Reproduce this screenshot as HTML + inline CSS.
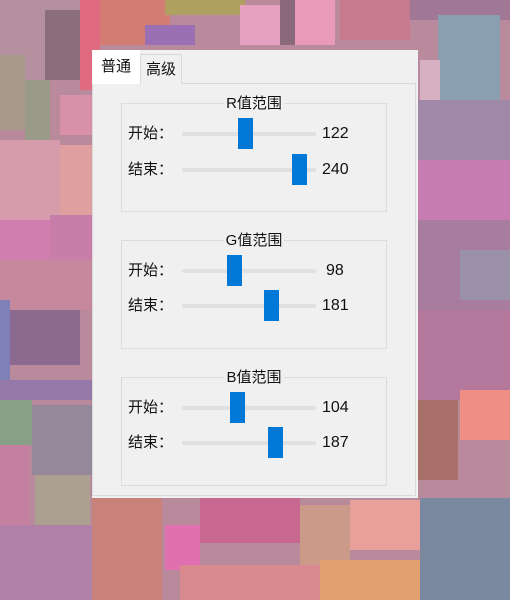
<!DOCTYPE html>
<html><head><meta charset="utf-8"><style>
*{margin:0;padding:0;box-sizing:border-box}
body{width:510px;height:600px;overflow:hidden;position:relative;background:#b98a9c;font-family:"Liberation Sans","Noto Sans CJK SC",sans-serif;font-size:14px;color:#111}
.r{position:absolute}
#panel{position:absolute;left:92px;top:50px;width:326px;height:448px;background:#f0f0f0}
.tab{position:absolute;font-size:15px;line-height:30px;text-align:center}
.pane{position:absolute;left:0;top:33px;width:324px;height:413px;border:1px solid #dadada}
.gb{position:absolute;left:29px;width:266px;height:109px;border:1px solid #dcdcdc}
.gt{position:absolute;top:-12px;left:0;width:100%;text-align:center;font-size:15px}
.gt span{background:#f0f0f0;padding:0 2px}
.lab{position:absolute;left:6px;font-size:15px;line-height:18px}
.trk{position:absolute;left:60px;width:134px;height:4px;background:#e0e0e0;border-radius:2px}
.th{position:absolute;width:15px;height:31px;background:#0078d7}
.val{position:absolute;left:200px;font-size:16px;line-height:18px}
</style></head><body>
<div class="r" style="left:0;top:0;width:100px;height:80px;background:#b5909f"></div>
<div class="r" style="left:45px;top:10px;width:40px;height:70px;background:#8c6e7a"></div>
<div class="r" style="left:80px;top:0;width:20px;height:90px;background:#e06a80"></div>
<div class="r" style="left:100px;top:0;width:70px;height:45px;background:#d37c74"></div>
<div class="r" style="left:165px;top:0;width:80px;height:15px;background:#b0a060"></div>
<div class="r" style="left:145px;top:25px;width:50px;height:20px;background:#9a6fb4"></div>
<div class="r" style="left:240px;top:5px;width:40px;height:40px;background:#e5a2c0"></div>
<div class="r" style="left:295px;top:0;width:40px;height:45px;background:#e89ab8"></div>
<div class="r" style="left:280px;top:0;width:15px;height:45px;background:#8a6a7a"></div>
<div class="r" style="left:340px;top:0;width:70px;height:40px;background:#c67a8d"></div>
<div class="r" style="left:410px;top:0;width:100px;height:20px;background:#a07896"></div>
<div class="r" style="left:438px;top:15px;width:62px;height:85px;background:#8aa0b0"></div>
<div class="r" style="left:420px;top:60px;width:20px;height:40px;background:#d6b0c0"></div>
<div class="r" style="left:418px;top:100px;width:92px;height:60px;background:#a088a8"></div>
<div class="r" style="left:418px;top:160px;width:92px;height:60px;background:#c77cb2"></div>
<div class="r" style="left:418px;top:220px;width:92px;height:90px;background:#a87c9e"></div>
<div class="r" style="left:460px;top:250px;width:50px;height:50px;background:#9a90a8"></div>
<div class="r" style="left:418px;top:310px;width:92px;height:90px;background:#b4789c"></div>
<div class="r" style="left:418px;top:400px;width:40px;height:80px;background:#a87068"></div>
<div class="r" style="left:460px;top:390px;width:50px;height:50px;background:#ef8e84"></div>
<div class="r" style="left:420px;top:498px;width:90px;height:102px;background:#7a88a0"></div>
<div class="r" style="left:0;top:55px;width:25px;height:75px;background:#a89a8a"></div>
<div class="r" style="left:25px;top:80px;width:25px;height:60px;background:#9a9a88"></div>
<div class="r" style="left:60px;top:95px;width:32px;height:40px;background:#d890a8"></div>
<div class="r" style="left:0;top:140px;width:60px;height:80px;background:#d69cac"></div>
<div class="r" style="left:60px;top:145px;width:32px;height:75px;background:#e0a0a0"></div>
<div class="r" style="left:0;top:220px;width:50px;height:40px;background:#d07eb0"></div>
<div class="r" style="left:50px;top:215px;width:42px;height:55px;background:#c87ea8"></div>
<div class="r" style="left:0;top:260px;width:92px;height:50px;background:#c6889c"></div>
<div class="r" style="left:10px;top:310px;width:70px;height:55px;background:#8c6a90"></div>
<div class="r" style="left:0;top:300px;width:10px;height:80px;background:#8080b8"></div>
<div class="r" style="left:0;top:380px;width:92px;height:20px;background:#9478a8"></div>
<div class="r" style="left:0;top:400px;width:32px;height:45px;background:#88a088"></div>
<div class="r" style="left:32px;top:405px;width:60px;height:70px;background:#94889a"></div>
<div class="r" style="left:35px;top:475px;width:55px;height:55px;background:#aca090"></div>
<div class="r" style="left:0;top:445px;width:30px;height:80px;background:#c480a0"></div>
<div class="r" style="left:0;top:525px;width:92px;height:75px;background:#b080a8"></div>
<div class="r" style="left:92px;top:498px;width:70px;height:102px;background:#c9827a"></div>
<div class="r" style="left:165px;top:525px;width:35px;height:45px;background:#e070b0"></div>
<div class="r" style="left:200px;top:498px;width:100px;height:45px;background:#c86890"></div>
<div class="r" style="left:180px;top:565px;width:140px;height:35px;background:#d88a90"></div>
<div class="r" style="left:300px;top:505px;width:50px;height:60px;background:#cc9a88"></div>
<div class="r" style="left:320px;top:560px;width:100px;height:40px;background:#e0a070"></div>
<div class="r" style="left:350px;top:500px;width:70px;height:50px;background:#e8a09a"></div>
<div id="panel">
  <div class="pane"></div>
  <div class="tab" style="left:0;top:0;width:48px;height:34px;background:#fff;line-height:34px">普通</div>
  <div class="tab" style="left:48px;top:4px;width:42px;height:30px;border:1px solid #dadada;border-bottom:none;background:#f0f0f0">高级</div>
  <div class="gb" style="top:53px"><div class="gt"><span>R值范围</span></div>
    <div class="lab" style="top:21px">开始：</div><div class="trk" style="top:28px"></div><div class="th" style="left:116px;top:14px"></div><div class="val" style="top:21px">122</div>
    <div class="lab" style="top:57px">结束：</div><div class="trk" style="top:64px"></div><div class="th" style="left:170px;top:50px"></div><div class="val" style="top:57px">240</div>
  </div>
  <div class="gb" style="top:190px"><div class="gt"><span>G值范围</span></div>
    <div class="lab" style="top:21px">开始：</div><div class="trk" style="top:28px"></div><div class="th" style="left:105px;top:14px"></div><div class="val" style="top:21px;left:204px">98</div>
    <div class="lab" style="top:56px">结束：</div><div class="trk" style="top:63px"></div><div class="th" style="left:142px;top:49px"></div><div class="val" style="top:56px">181</div>
  </div>
  <div class="gb" style="top:327px"><div class="gt"><span>B值范围</span></div>
    <div class="lab" style="top:21px">开始：</div><div class="trk" style="top:28px"></div><div class="th" style="left:108px;top:14px"></div><div class="val" style="top:21px">104</div>
    <div class="lab" style="top:56px">结束：</div><div class="trk" style="top:63px"></div><div class="th" style="left:146px;top:49px"></div><div class="val" style="top:56px">187</div>
  </div>
</div>
</body></html>
